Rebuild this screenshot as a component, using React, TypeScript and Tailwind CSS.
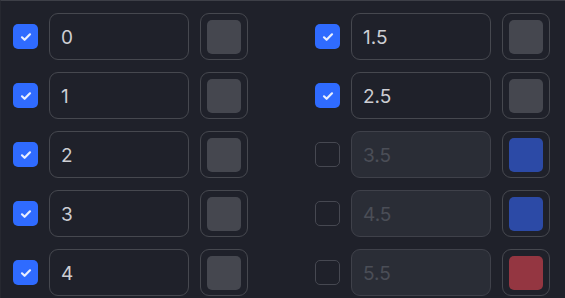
import React from "react";

type Item = { label: string; checked: boolean; color: string };

const left: Item[] = [
  { label: "0", checked: true, color: "#45474f" },
  { label: "1", checked: true, color: "#45474f" },
  { label: "2", checked: true, color: "#45474f" },
  { label: "3", checked: true, color: "#45474f" },
  { label: "4", checked: true, color: "#45474f" },
];
const right: Item[] = [
  { label: "1.5", checked: true, color: "#45474f" },
  { label: "2.5", checked: true, color: "#45474f" },
  { label: "3.5", checked: false, color: "#2c4aa6" },
  { label: "4.5", checked: false, color: "#2c4aa6" },
  { label: "5.5", checked: false, color: "#943641" },
];

function Row({ item }: { item: Item }) {
  return (
    <div className="flex items-center gap-[11px] h-[47px]">
      {item.checked ? (
        <div className="w-[25px] h-[25px] rounded-[5px] bg-[#2f6bff] flex items-center justify-center shrink-0">
          <svg width="14" height="14" viewBox="0 0 14 14" fill="none">
            <path d="M3 7.3l2.6 2.5L11 4.3" stroke="#e8eeff" strokeWidth="2.2" strokeLinecap="round" strokeLinejoin="round" />
          </svg>
        </div>
      ) : (
        <div className="w-[25px] h-[25px] rounded-[5px] border-[1.5px] border-[#464851] shrink-0" />
      )}
      <div
        className={
          "w-[140px] h-[47px] rounded-[9px] border-[1.5px] flex items-center pl-[11px] pt-[3px] text-[19px] " +
          (item.checked
            ? "border-[#46484f] bg-[#1f212a] text-[#cdced3]"
            : "border-[#3f414a] bg-[#2a2d36] text-[#4b4e57]")
        }
      >
        {item.label}
      </div>
      <div className="w-[48px] h-[47px] rounded-[9px] border-[1.5px] border-[#46484f] flex items-center justify-center shrink-0">
        <div className="w-[34px] h-[34px] rounded-[5px]" style={{ backgroundColor: item.color }} />
      </div>
    </div>
  );
}

export default function App() {
  return (
    <div
      className="w-[565px] h-[298px] bg-[#1f212a] border-t border-t-[#3d3f47] border-l border-l-[#262830] overflow-hidden"
      style={{ fontFamily: "Inter, 'Noto Sans', sans-serif" }}
    >
      <div className="flex gap-[67px] pl-[12px] pt-[12px]">
        <div className="flex flex-col gap-[12px]">
          {left.map((it) => (
            <Row key={it.label} item={it} />
          ))}
        </div>
        <div className="flex flex-col gap-[12px]">
          {right.map((it) => (
            <Row key={it.label} item={it} />
          ))}
        </div>
      </div>
    </div>
  );
}
